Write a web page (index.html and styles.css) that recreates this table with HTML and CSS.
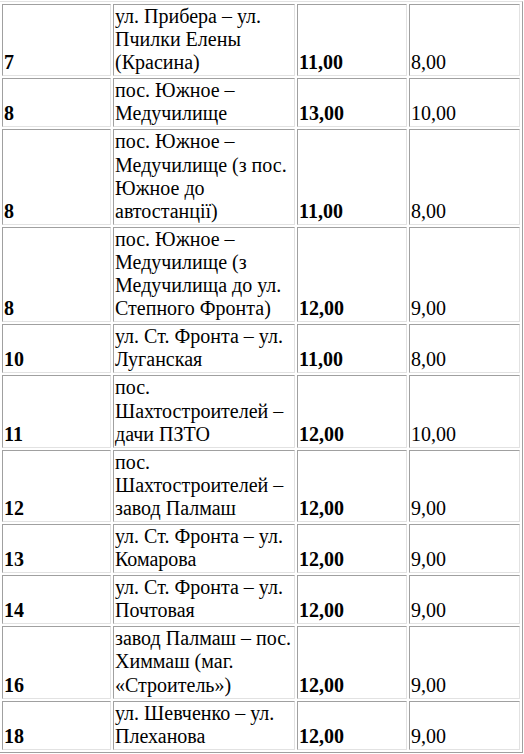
FILE: index.html
```html
<!DOCTYPE html>
<html lang="ru">
<head>
<meta charset="utf-8">
<title>Тарифы</title>
<link rel="stylesheet" href="styles.css">
</head>
<body>
<table class="fares">
  <colgroup>
    <col class="c-num">
    <col class="c-route">
    <col class="c-full">
    <col class="c-disc">
  </colgroup>
  <tr><td class="num">7</td><td>ул. Прибера – ул.<br>Пчилки Елены<br>(Красина)</td><td class="num">11,00</td><td>8,00</td></tr>
  <tr><td class="num">8</td><td>пос. Южное –<br>Медучилище</td><td class="num">13,00</td><td>10,00</td></tr>
  <tr><td class="num">8</td><td>пос. Южное –<br>Медучилище (з пос.<br>Южное до<br>автостанції)</td><td class="num">11,00</td><td>8,00</td></tr>
  <tr><td class="num">8</td><td>пос. Южное –<br>Медучилище (з<br>Медучилища до ул.<br>Степного Фронта)</td><td class="num">12,00</td><td>9,00</td></tr>
  <tr><td class="num">10</td><td>ул. Ст. Фронта – ул.<br>Луганская</td><td class="num">11,00</td><td>8,00</td></tr>
  <tr><td class="num">11</td><td>пос.<br>Шахтостроителей –<br>дачи ПЗТО</td><td class="num">12,00</td><td>10,00</td></tr>
  <tr><td class="num">12</td><td>пос.<br>Шахтостроителей –<br>завод Палмаш</td><td class="num">12,00</td><td>9,00</td></tr>
  <tr><td class="num">13</td><td>ул. Ст. Фронта – ул.<br>Комарова</td><td class="num">12,00</td><td>9,00</td></tr>
  <tr><td class="num">14</td><td>ул. Ст. Фронта – ул.<br>Почтовая</td><td class="num">12,00</td><td>9,00</td></tr>
  <tr><td class="num">16</td><td>завод Палмаш – пос.<br>Химмаш (маг.<br>«Строитель»)</td><td class="num">12,00</td><td>9,00</td></tr>
  <tr><td class="num">18</td><td>ул. Шевченко – ул.<br>Плеханова</td><td class="num">12,00</td><td>9,00</td></tr>
</table>
</body>
</html>
```

FILE: styles.css
```css
html, body {
  margin: 0;
  padding: 0;
  background: #ffffff;
}

.fares {
  margin: 1px 0 0 -1px;
  width: 524px;
  table-layout: fixed;
  border-collapse: separate;
  border-spacing: 2px;
  border: 1px solid;
  border-color: #e2e2e2 #a0a0a0 #a0a0a0 #e2e2e2;
  font-family: "Liberation Serif", "Times New Roman", serif;
  font-size: 20px;
  line-height: 23.1px;
  color: #000000;
}

.c-num { width: 109px; }
.c-route { width: 182px; }
.c-full { width: 110px; }
.c-disc { width: 111px; }

.fares td {
  vertical-align: bottom;
  padding: 0 1px 1px 1px;
  border: 1px solid;
  border-color: #a0a0a0 #e2e2e2 #e2e2e2 #a0a0a0;
  white-space: nowrap;
}

.fares td.num {
  font-weight: bold;
}
```
